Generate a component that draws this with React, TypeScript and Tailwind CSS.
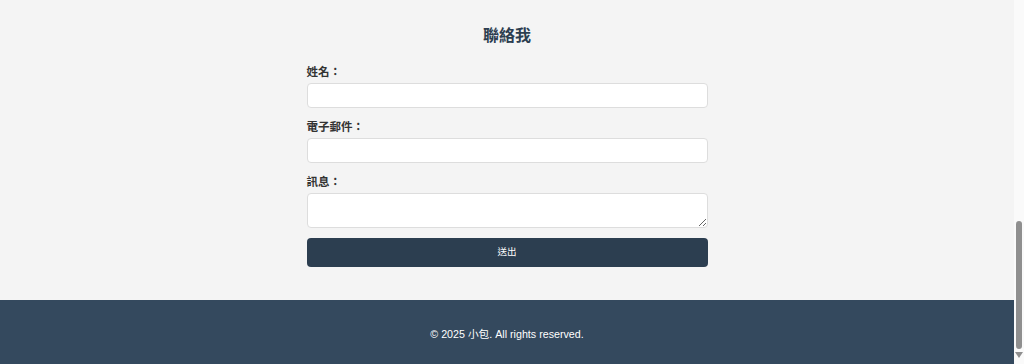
import React from 'react';

const FONT = { fontFamily: '"Liberation Sans", "Noto Sans CJK TC", sans-serif' };

const Field: React.FC<{ label: string; children: React.ReactNode; last?: boolean }> = ({ label, children, last }) => (
  <div className={last ? 'mb-[10px]' : 'mb-[11px]'}>
    <label className="block text-[11.5px] leading-4 font-bold text-[#333] mb-[3px]">{label}</label>
    {children}
  </div>
);

// page scrollbar, drawn as seen at the bottom of the scroll range
const Scrollbar: React.FC = () => (
  <div className="w-[10px] h-[364px] bg-[#fafafa] flex flex-col items-center pt-[221px]">
    <div className="w-[6px] h-[128px] rounded-full bg-[#8f8f8f]" />
    <svg className="mt-[3px]" width="8" height="6" viewBox="0 0 8 6">
      <path d="M0 0 L8 0 L4 6 Z" fill="#8f8f8f" />
    </svg>
  </div>
);

export default function App() {
  return (
    <div className="h-[364px] w-[1024px] flex overflow-hidden bg-[#f4f4f4]" style={FONT}>
      <div className="w-[1014px] flex flex-col">
        <section className="pt-6 pb-[33px] flex justify-center">
          <div className="w-[401px]">
            <h2 className="text-center text-[16px] leading-6 font-bold text-[#2c3e50] mb-4">聯絡我</h2>
            <form onSubmit={(e) => e.preventDefault()}>
              <Field label="姓名：">
                <input type="text" className="block w-full h-[25px] bg-white border border-[#ddd] rounded-[4px] px-2 text-xs outline-none" />
              </Field>
              <Field label="電子郵件：">
                <input type="email" className="block w-full h-[25px] bg-white border border-[#ddd] rounded-[4px] px-2 text-xs outline-none" />
              </Field>
              <Field label="訊息：" last>
                <textarea className="block w-full h-[35px] bg-white border border-[#ddd] rounded-[4px] px-2 text-xs outline-none" />
              </Field>
              <button type="submit" className="block w-full h-[29px] bg-[#2c3e50] text-white text-[9.5px] rounded-[4px]">
                送出
              </button>
            </form>
          </div>
        </section>

        <footer className="h-16 pt-[3px] bg-[#34495e] flex items-center justify-center">
          <p className="text-[10.7px] leading-4 text-white">© 2025 小包. All rights reserved.</p>
        </footer>
      </div>
      <Scrollbar />
    </div>
  );
}
